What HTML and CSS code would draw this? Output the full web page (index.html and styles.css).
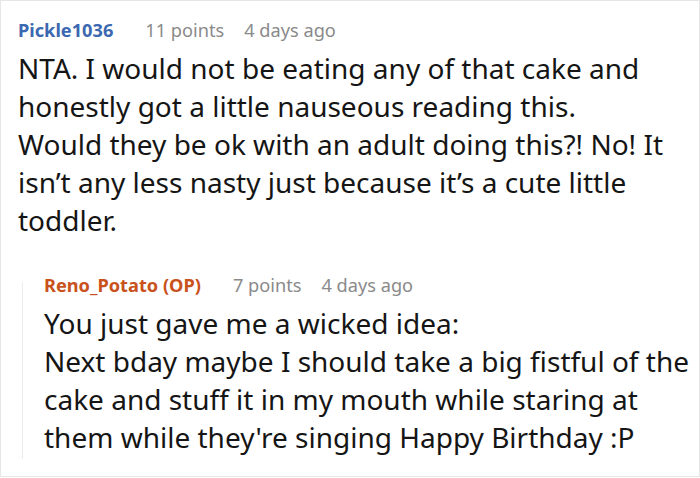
FILE: index.html
```html
<!DOCTYPE html>
<html>
<head>
<meta charset="utf-8">
<link rel="stylesheet" href="styles.css">
</head>
<body>
<div class="frame">
  <div class="comment">
    <div class="meta">
      <span class="author">Pickle1036</span>
      <span class="info">11 points</span>
      <span class="info">4 days ago</span>
    </div>
    <div class="body">NTA. I would not be eating any of that cake and honestly got a little nauseous reading this. Would they be ok with an adult doing this?! No! It isn’t any less nasty just because it’s a cute little toddler.</div>
    <div class="reply">
      <div class="thread-line"></div>
      <div class="reply-content">
        <div class="meta">
          <span class="author op">Reno_Potato (OP)</span>
          <span class="info">7 points</span>
          <span class="info">4 days ago</span>
        </div>
        <div class="body">You just gave me a wicked idea:<br>Next bday maybe I should take a big fistful of the cake and stuff it in my mouth while staring at them while they're singing Happy Birthday :P</div>
      </div>
    </div>
  </div>
</div>
</body>
</html>
```

FILE: styles.css
```css
html, body {
  margin: 0;
  padding: 0;
  background: #ffffff;
}
.frame {
  width: 700px;
  height: 477px;
  box-sizing: border-box;
  border: 1px solid #e6e6e6;
  overflow: hidden;
  font-family: "Noto Sans", "Open Sans", sans-serif;
}
.comment {
  padding: 18px 0 0 17px;
}
.meta {
  display: flex;
  font-size: 18.2px;
  line-height: 22px;
  white-space: nowrap;
}
.author {
  font-weight: bold;
  color: #3b68b0;
  margin-right: 32px;
}
.author.op {
  color: #c9521c;
}
.info {
  color: #8a8a8a;
  margin-right: 20px;
}
.body {
  margin-top: 8px;
  font-size: 28px;
  line-height: 38px;
  color: #151515;
  width: 648px;
}
.reply {
  display: flex;
  margin-top: 35px;
}
.thread-line {
  width: 2px;
  background: #ececec;
  margin-left: 4px;
  margin-top: 8px;
  height: 177px;
}
.reply-content {
  margin-left: 21px;
}
.reply-content .body {
  width: 655px;
}
```
